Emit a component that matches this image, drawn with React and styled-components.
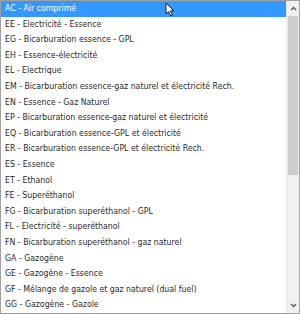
import React from 'react'
import styled, { createGlobalStyle } from 'styled-components'

const GlobalStyle = createGlobalStyle`
	html, body {
		margin: 0;
		padding: 0;
		background: #ffffff;
	}
`

const items = [
	'AC - Air comprimé',
	'EE - Electricité - Essence',
	'EG - Bicarburation essence - GPL',
	'EH - Essence-électricité',
	'EL - Electrique',
	'EM - Bicarburation essence-gaz naturel et électricité Rech.',
	'EN - Essence - Gaz Naturel',
	'EP - Bicarburation essence-gaz naturel et électricité',
	'EQ - Bicarburation essence-GPL et électricité',
	'ER - Bicarburation essence-GPL et électricité Rech.',
	'ES - Essence',
	'ET - Ethanol',
	'FE - Superéthanol',
	'FG - Bicarburation superéthanol - GPL',
	'FL - Electricité - superéthanol',
	'FN - Bicarburation superéthanol - gaz naturel',
	'GA - Gazogène',
	'GE - Gazogène - Essence',
	'GF - Mélange de gazole et gaz naturel (dual fuel)',
	'GG - Gazogène - Gazole',
]

const Box = styled.div`
	position: relative;
	box-sizing: border-box;
	width: 300px;
	height: 314px;
	border: 1px solid #a0a0a0;
	background: #ffffff;
	display: flex;
	overflow: hidden;
`

const List = styled.ul`
	flex: 1;
	margin: 0;
	padding: 0;
	list-style: none;
	overflow: hidden;
`

const Item = styled.li`
	height: 15.6px;
	line-height: 15.6px;
	padding-left: 4px;
	white-space: nowrap;
	font-family: "DejaVu Sans Condensed", "DejaVu Sans", sans-serif;
	font-stretch: condensed;
	font-size: 8.7px;
	color: ${props => (props.selected ? '#ffffff' : '#2a2a2a')};
	background: ${props => (props.selected ? '#3399ff' : 'transparent')};
`

const Scrollbar = styled.div`
	width: 12px;
	display: flex;
	flex-direction: column;
	background: #f0f0f0;
	border-left: 1px solid #e6e6e6;
`

const Arrow = styled.div`
	height: 15px;
	display: flex;
	align-items: center;
	justify-content: center;
`

const Track = styled.div`
	flex: 1;
	display: flex;
	flex-direction: column;
	padding: 0 1px;
`

const Thumb = styled.div`
	height: 159px;
	background: #cdcdcd;
`

const Cursor = styled.svg`
	position: absolute;
	left: 164px;
	top: 1px;
`

const Chevron = ({ up }) => (
	<svg width="7" height="5" viewBox="0 0 7 5">
		<path
			d={up ? 'M1 4 L3.5 1.5 L6 4' : 'M1 1 L3.5 3.5 L6 1'}
			fill="none"
			stroke="#606060"
			strokeWidth="1.5"
		/>
	</svg>
)

const App = () => (
	<>
		<GlobalStyle />
		<Box>
			<List>
				{items.map((item, i) => (
					<Item key={item} selected={i === 0}>{item}</Item>
				))}
			</List>
			<Scrollbar>
				<Arrow><Chevron up /></Arrow>
				<Track>
					<Thumb />
				</Track>
				<Arrow><Chevron /></Arrow>
			</Scrollbar>
			<Cursor width="11" height="15" viewBox="0 0 11 15">
				<path
					d="M1 1 L1 12 L3.6 9.6 L5.6 14 L7.4 13.2 L5.5 8.8 L9 8.8 Z"
					fill="#ffffff"
					stroke="#1a1a1a"
					strokeWidth="1"
					strokeLinejoin="round"
				/>
			</Cursor>
		</Box>
	</>
)

export default App
